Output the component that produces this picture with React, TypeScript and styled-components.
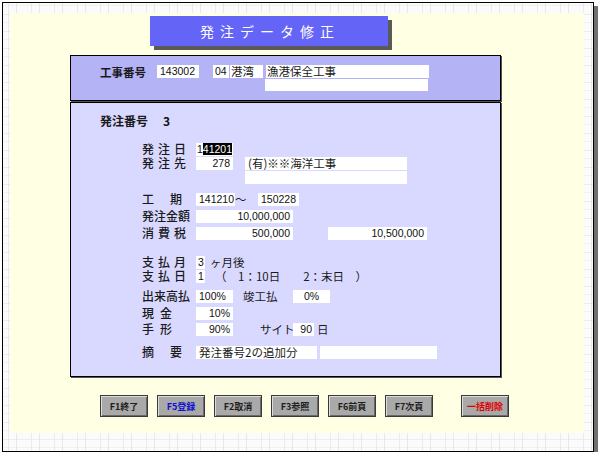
import React from 'react'
import styled, { createGlobalStyle } from 'styled-components'

const GlobalStyle = createGlobalStyle`
  html, body {
    margin: 0;
    padding: 0;
    background: #ffffff;
  }
  body {
    font-family: "Liberation Sans", "Noto Sans CJK JP", sans-serif;
    font-size: 11px;
    color: #111111;
  }
`

const Frame = styled.div`
  box-sizing: border-box;
  margin: 2px 0 0 2px;
  width: 592px;
  height: 450px;
  border: 1px solid #000000;
  box-shadow: 4px 4px 0 #707070;
  padding: 10px 9px 18px 7px;
  background:
    repeating-linear-gradient(90deg, rgba(255, 255, 255, 0) 0 5px, rgba(190, 190, 190, 0.25) 5px 6px, rgba(255, 255, 255, 0) 6px 13px, rgba(160, 160, 160, 0.2) 13px 14px, rgba(255, 255, 255, 0) 14px 23px),
    repeating-linear-gradient(0deg, rgba(255, 255, 255, 0) 0 3px, rgba(200, 200, 200, 0.2) 3px 4px, rgba(255, 255, 255, 0) 4px 11px, rgba(180, 180, 180, 0.2) 11px 12px, rgba(255, 255, 255, 0) 12px 17px),
    #fbfbfb;
`

const Cream = styled.div`
  height: 100%;
  background: #ffffe3;
  display: flex;
  flex-direction: column;
`

const Title = styled.div`
  margin: 3px 0 0 140px;
  width: 238px;
  height: 30px;
  background: #6464f6;
  box-shadow: 4px 4px 0 #5a5a5a;
  color: #ffffff;
  font-family: "Noto Sans CJK JP", sans-serif;
  font-size: 14px;
  letter-spacing: 6px;
  display: flex;
  align-items: center;
  justify-content: center;
  padding-left: 2px;
  box-sizing: border-box;
`

const Panel = styled.div<{ $bg: string; $h: number; $mt: number; $pt: number }>`
  box-sizing: border-box;
  margin: ${({ $mt }) => $mt}px 0 0 60px;
  width: 431px;
  height: ${({ $h }) => $h}px;
  background: ${({ $bg }) => $bg};
  border: 1px solid #000000;
  box-shadow: 1px 1px 0 #555555;
  padding: ${({ $pt }) => $pt}px 0 0 29px;
  display: flex;
  flex-direction: column;
`

const Row = styled.div<{ $mt?: number; $pl?: number; $h?: number }>`
  display: flex;
  align-items: center;
  height: ${({ $h }) => $h || 14}px;
  margin-top: ${({ $mt }) => $mt || 0}px;
  padding-left: ${({ $pl }) => $pl || 0}px;
  white-space: nowrap;
`

const Label = styled.span<{ $w: number; $ls?: number; $bold?: boolean; $size?: number }>`
  display: inline-block;
  width: ${({ $w }) => $w}px;
  line-height: 14px;
  font-family: "Noto Sans CJK JP", sans-serif;
  font-size: ${({ $size }) => $size || 12}px;
  font-weight: ${({ $bold }) => ($bold ? 700 : 500)};
  letter-spacing: ${({ $ls }) => $ls || 0}px;
  color: #1a1a1a;
  flex-shrink: 0;
`

const Field = styled.span<{ $w: number; $align?: string; $ml?: number; $pad?: number; $h?: number }>`
  display: inline-block;
  box-sizing: border-box;
  flex-shrink: 0;
  width: ${({ $w }) => $w}px;
  height: ${({ $h }) => $h || 13}px;
  line-height: ${({ $h }) => $h || 13}px;
  margin-left: ${({ $ml }) => $ml || 0}px;
  padding: 0 ${({ $pad }) => ($pad === undefined ? 3 : $pad)}px;
  background: #ffffff;
  text-align: ${({ $align }) => $align || 'left'};
  font-family: "Liberation Sans", "Noto Sans CJK JP", sans-serif;
  font-size: 10.5px;
  white-space: nowrap;
`

const Selected = styled.span`
  background: #000000;
  color: #ffffff;
`

const Text = styled.span<{ $ml?: number; $w?: number }>`
  display: inline-block;
  flex-shrink: 0;
  margin-left: ${({ $ml }) => $ml || 0}px;
  width: ${({ $w }) => ($w ? `${$w}px` : 'auto')};
  line-height: 13px;
  vertical-align: top;
  font-family: "Noto Sans CJK JP", sans-serif;
  font-size: 11.5px;
  color: #1a1a1a;
`

const Num = styled.span`
  font-family: "Noto Sans CJK JP", sans-serif;
  font-size: 12px;
  line-height: 14px;
  font-weight: 700;
  margin-left: 15px;
`

const Indent = styled.div`
  display: flex;
  flex-direction: column;
  padding-left: 42px;
`

const ButtonBar = styled.div`
  display: flex;
  gap: 9px;
  margin: 18px 0 0 90px;
`

const FnButton = styled.button<{ $color?: string; $ml?: number }>`
  box-sizing: border-box;
  width: 48px;
  height: 22px;
  margin-left: ${({ $ml }) => $ml || 0}px;
  padding: 0;
  background: #a9a9a9;
  border: 1px solid #3a3a3a;
  box-shadow: inset 1px 1px 0 #dcdcdc, inset -1px -1px 0 #6a6a6a;
  font-family: "Noto Sans CJK JP", sans-serif;
  font-size: 9px;
  font-weight: 700;
  color: ${({ $color }) => $color || '#1e1e1e'};
  cursor: pointer;
`

export default function App() {
  return (
    <>
      <GlobalStyle />
      <Frame>
        <Cream>
          <Title>発注データ修正</Title>

          <Panel $bg="#b3b3f6" $h={46} $mt={9} $pt={9}>
            <Row $h={13}>
              <Label $w={57} $size={11.5} $bold>工事番号</Label>
              <Field $w={42}>143002</Field>
              <Field $w={16} $ml={14} $pad={2}>04</Field>
              <Field $w={33} $ml={1} $pad={1}>
                <Text>港湾</Text>
              </Field>
              <Field $w={163} $ml={3} $pad={1}>
                <Text>漁港保全工事</Text>
              </Field>
            </Row>
            <Row $h={12} $mt={1} $pl={165}>
              <Field $w={163} $h={12} />
            </Row>
          </Panel>

          <Panel $bg="#d9d9ff" $h={275} $mt={1} $pt={11}>
            <Row>
              <Label $w={48} $bold>発注番号</Label>
              <Num>3</Num>
            </Row>

            <Indent>
              <Row $mt={14}>
                <Label $w={54} $ls={4}>発注日</Label>
                <Field $w={37} $pad={1}>
                  1<Selected>41201</Selected>
                </Field>
              </Row>
              <Row>
                <Label $w={54} $ls={4}>発注先</Label>
                <Field $w={37} $align="right">278</Field>
                <Field $w={162} $ml={12}>
                  <Text>(有)※※海洋工事</Text>
                </Field>
              </Row>
              <Row $pl={103}>
                <Field $w={162} />
              </Row>

              <Row $mt={8}>
                <Label $w={54} $ls={16}>工期</Label>
                <Field $w={39}>141210</Field>
                <Text $w={23}>～</Text>
                <Field $w={41}>150228</Field>
              </Row>
              <Row $mt={3}>
                <Label $w={54}>発注金額</Label>
                <Field $w={97} $align="right">10,000,000</Field>
              </Row>
              <Row $mt={3}>
                <Label $w={54} $ls={4}>消費税</Label>
                <Field $w={97} $align="right">500,000</Field>
                <Field $w={99} $ml={35} $align="right">10,500,000</Field>
              </Row>

              <Row $mt={15}>
                <Label $w={54} $ls={4}>支払月</Label>
                <Field $w={9} $pad={2}>3</Field>
                <Text $ml={5}>ヶ月後</Text>
              </Row>
              <Row>
                <Label $w={54} $ls={4}>支払日</Label>
                <Field $w={9} $pad={2}>1</Field>
                <Text $ml={10}>（　1：10日　　2：末日　）</Text>
              </Row>

              <Row $mt={6}>
                <Label $w={54}>出来高払</Label>
                <Field $w={37}>100%</Field>
                <Text $ml={10} $w={50}>竣工払</Text>
                <Field $w={37} $align="center">0%</Field>
              </Row>
              <Row $mt={3}>
                <Label $w={54} $ls={6}>現金</Label>
                <Field $w={37} $align="right">10%</Field>
              </Row>
              <Row $mt={2}>
                <Label $w={54} $ls={6}>手形</Label>
                <Field $w={37} $align="right">90%</Field>
                <Text $ml={27} $w={33}>サイト</Text>
                <Field $w={21} $align="right" $pad={2}>90</Field>
                <Text $ml={3}>日</Text>
              </Row>

              <Row $mt={9}>
                <Label $w={54} $ls={16}>摘要</Label>
                <Field $w={121}>
                  <Text>発注番号2の追加分</Text>
                </Field>
                <Field $w={117} $ml={3} />
              </Row>
            </Indent>
          </Panel>

          <ButtonBar>
            <FnButton>F1終了</FnButton>
            <FnButton $color="#1010d0">F5登録</FnButton>
            <FnButton>F2取消</FnButton>
            <FnButton>F3参照</FnButton>
            <FnButton>F6前頁</FnButton>
            <FnButton>F7次頁</FnButton>
            <FnButton $color="#e00000" $ml={19}>一括削除</FnButton>
          </ButtonBar>
        </Cream>
      </Frame>
    </>
  )
}
